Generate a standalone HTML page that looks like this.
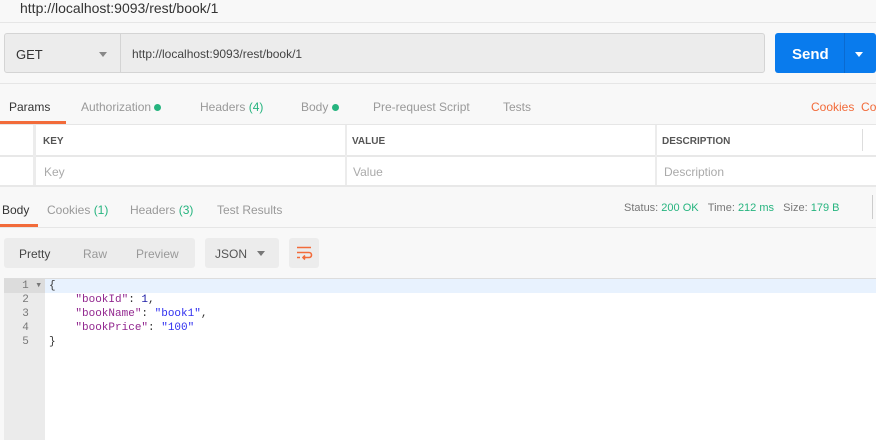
<!DOCTYPE html>
<html><head><style>
*{margin:0;padding:0;box-sizing:border-box}
body{width:876px;height:440px;overflow:hidden;background:#f8f8f8;font-family:"Liberation Sans",sans-serif;position:relative;font-size:12px;color:#505050}
.a{position:absolute}
.g{color:#26b47f}
</style></head><body>
<div class="a" style="left:20px;top:0;font-size:14px;color:#333;line-height:16px">http://localhost:9093/rest/book/1</div>
<div class="a" style="left:0;top:22px;width:876px;height:1px;background:#e6e6e6"></div>
<div class="a" style="left:4px;top:33px;width:761px;height:40px;background:#ececec;border:1px solid #d4d4d4;border-radius:3px"></div>
<div class="a" style="left:120px;top:34px;width:1px;height:38px;background:#d4d4d4"></div>
<div class="a" style="left:16px;top:47px;font-size:13px;color:#333">GET</div>
<div class="a" style="left:99px;top:52px;border-left:4px solid transparent;border-right:4px solid transparent;border-top:5px solid #888"></div>
<div class="a" style="left:132px;top:47px;font-size:12px;color:#444">http://localhost:9093/rest/book/1</div>
<div class="a" style="left:775px;top:33px;width:101px;height:40px;background:#097bed;border-radius:3px"></div>
<div class="a" style="left:844px;top:33px;width:1px;height:40px;background:#0a6ad0"></div>
<div class="a" style="left:792px;top:46px;font-size:15px;font-weight:bold;color:#fff">Send</div>
<div class="a" style="left:855px;top:52px;border-left:4px solid transparent;border-right:4px solid transparent;border-top:5px solid #fff"></div>
<div class="a" style="left:0;top:83px;width:876px;height:1px;background:#e6e6e6"></div>
<div class="a" style="left:9px;top:100px;font-size:12px;color:#333">Params</div>
<div class="a" style="left:81px;top:100px;color:#999">Authorization <span style="display:inline-block;width:7px;height:7px;border-radius:50%;background:#26b47f"></span></div>
<div class="a" style="left:200px;top:100px;color:#999">Headers <span class="g">(4)</span></div>
<div class="a" style="left:301px;top:100px;color:#999">Body <span style="display:inline-block;width:7px;height:7px;border-radius:50%;background:#26b47f"></span></div>
<div class="a" style="left:373px;top:100px;color:#999">Pre-request Script</div>
<div class="a" style="left:503px;top:100px;color:#999">Tests</div>
<div class="a" style="left:811px;top:100px;color:#f26b3a">Cookies&nbsp;&nbsp;Co</div>
<div class="a" style="left:0;top:121px;width:66px;height:3px;background:#f26b3a"></div>
<div class="a" style="left:0;top:124px;width:876px;height:1px;background:#e6e6e6"></div>
<div class="a" style="left:0;top:125px;width:876px;height:60px;background:#fff"></div>
<div class="a" style="left:0;top:155px;width:876px;height:2px;background:#e8e8e8"></div>
<div class="a" style="left:0;top:185px;width:876px;height:2px;background:#e8e8e8"></div>
<div class="a" style="left:33px;top:125px;width:3px;height:60px;background:#ececec"></div>
<div class="a" style="left:345px;top:125px;width:2px;height:60px;background:#ececec"></div>
<div class="a" style="left:655px;top:125px;width:2px;height:60px;background:#ececec"></div>
<div class="a" style="left:862px;top:129px;width:1px;height:22px;background:#ddd"></div>
<div class="a" style="left:43px;top:136px;font-size:10px;font-weight:bold;color:#555">KEY</div>
<div class="a" style="left:352px;top:136px;font-size:10px;font-weight:bold;color:#555">VALUE</div>
<div class="a" style="left:662px;top:136px;font-size:10px;font-weight:bold;color:#555">DESCRIPTION</div>
<div class="a" style="left:44px;top:165px;color:#aaa">Key</div>
<div class="a" style="left:353px;top:165px;color:#aaa">Value</div>
<div class="a" style="left:664px;top:165px;color:#aaa">Description</div>
<div class="a" style="left:2px;top:203px;color:#333">Body</div>
<div class="a" style="left:47px;top:203px;color:#999">Cookies <span class="g">(1)</span></div>
<div class="a" style="left:130px;top:203px;color:#999">Headers <span class="g">(3)</span></div>
<div class="a" style="left:217px;top:203px;color:#999">Test Results</div>
<div class="a" style="left:624px;top:202px;font-size:11px;color:#777">Status: <span class="g">200 OK</span>&nbsp;&nbsp;&nbsp;Time: <span class="g">212 ms</span>&nbsp;&nbsp;&nbsp;Size: <span class="g">179 B</span></div>
<div class="a" style="left:872px;top:195px;width:1px;height:24px;background:#ccc"></div>
<div class="a" style="left:0;top:224px;width:38px;height:3px;background:#f26b3a"></div>
<div class="a" style="left:0;top:227px;width:876px;height:1px;background:#e6e6e6"></div>
<div class="a" style="left:4px;top:238px;width:191px;height:30px;background:#ececec;border-radius:3px"></div>
<div class="a" style="left:19px;top:247px;color:#444">Pretty</div>
<div class="a" style="left:83px;top:247px;color:#999">Raw</div>
<div class="a" style="left:136px;top:247px;color:#999">Preview</div>
<div class="a" style="left:205px;top:238px;width:74px;height:30px;background:#ececec;border-radius:3px"></div>
<div class="a" style="left:215px;top:247px;color:#555">JSON</div>
<div class="a" style="left:257px;top:251px;border-left:4px solid transparent;border-right:4px solid transparent;border-top:5px solid #777"></div>
<div class="a" style="left:289px;top:238px;width:30px;height:30px;background:#ececec;border-radius:3px"></div>
<svg class="a" style="left:295px;top:245px" width="18" height="16" viewBox="0 0 18 16"><path d="M2 2.5H16M2 7.5H14a2.5 2.5 0 0 1 0 5H8M2 12.5H5M10 10.5L8 12.5L10 14.5" stroke="#f26b3a" stroke-width="1.6" fill="none"/></svg>
<div class="a" style="left:4px;top:278px;width:872px;height:162px;background:#fff;border-top:1px solid #ddd"></div>
<div class="a" style="left:4px;top:279px;width:41px;height:161px;background:#ebebeb"></div>
<div class="a" style="left:45px;top:279px;width:831px;height:14px;background:#e8f2fe"></div>
<div class="a" style="left:4px;top:279px;width:41px;height:14px;background:#dcdcdc"></div>
<div class="a" style="left:4px;top:279px;font-family:'Liberation Mono',monospace;font-size:11px;line-height:14px;color:#777;width:38px;text-align:right">1 ▾<br>2&nbsp;&nbsp;<br>3&nbsp;&nbsp;<br>4&nbsp;&nbsp;<br>5&nbsp;&nbsp;</div>
<div class="a" style="left:49px;top:279px;font-family:'Liberation Mono',monospace;font-size:11px;line-height:14px;color:#333;white-space:pre">{
    <span style="color:#92278f">"bookId"</span>: <span style="color:#1a1aa6">1</span>,
    <span style="color:#92278f">"bookName"</span>: <span style="color:#3030f0">"book1"</span>,
    <span style="color:#92278f">"bookPrice"</span>: <span style="color:#3030f0">"100"</span>
}</div>
</body></html>
